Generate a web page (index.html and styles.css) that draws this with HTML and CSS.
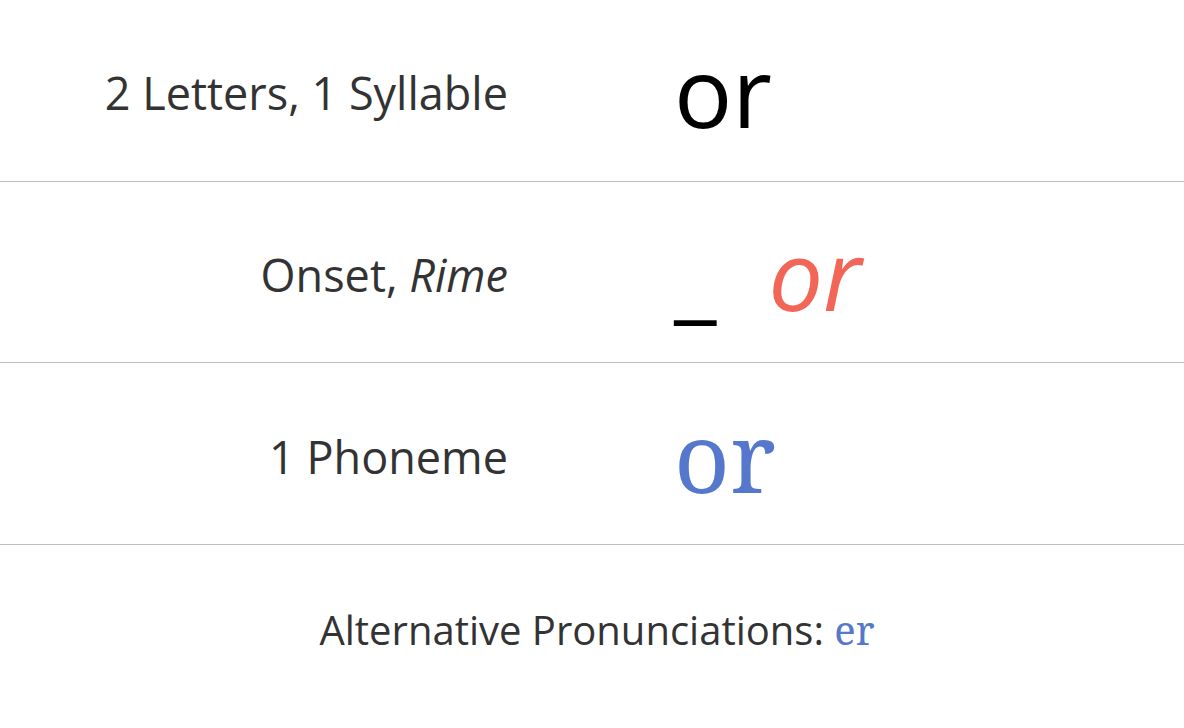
FILE: index.html
```html
<!DOCTYPE html>
<html lang="en">
<head>
<meta charset="utf-8">
<title>or</title>
<link rel="stylesheet" href="styles.css">
</head>
<body>
<main class="card">
  <section class="row">
    <div class="label">2 Letters, 1 Syllable</div>
    <div class="value value-plain">or</div>
  </section>
  <section class="row">
    <div class="label">Onset, <em>Rime</em></div>
    <div class="value value-split"><span class="onset">_</span><span class="rime">or</span></div>
  </section>
  <section class="row">
    <div class="label">1 Phoneme</div>
    <div class="value value-phoneme">or</div>
  </section>
  <footer class="alt">Alternative Pronunciations: <span class="alt-item">er</span></footer>
</main>
</body>
</html>
```
FILE: styles.css
```css
html, body {
  margin: 0;
  padding: 0;
  background: #fff;
}
body {
  font-family: "Open Sans", "Noto Sans", sans-serif;
  color: #333;
}
.card {
  width: 1184px;
}
.row {
  display: grid;
  grid-template-columns: 592px 1fr;
  align-items: center;
  height: 180.67px;
  border-bottom: 1px solid #bdbdbd;
  box-sizing: content-box;
}
.label {
  text-align: right;
  padding-right: 84px;
  padding-top: 5px;
  font-size: 45px;
  line-height: 1;
}
.label em {
  font-style: italic;
}
.value {
  padding-left: 82px;
  font-size: 97px;
  line-height: 1;
  color: #000;
}
.value-split {
  display: flex;
  align-items: baseline;
  gap: 52px;
  padding-top: 3px;
}
.rime {
  font-style: italic;
  color: #f26657;
}
.value-phoneme {
  font-family: "Noto Serif", "DejaVu Serif", serif;
  color: #5577cc;
  padding-top: 3px;
}
.alt {
  text-align: center;
  font-size: 40px;
  padding-top: 57px;
  padding-left: 10px;
}
.alt-item {
  font-family: "Noto Serif", "DejaVu Serif", serif;
  color: #5577cc;
}
```
